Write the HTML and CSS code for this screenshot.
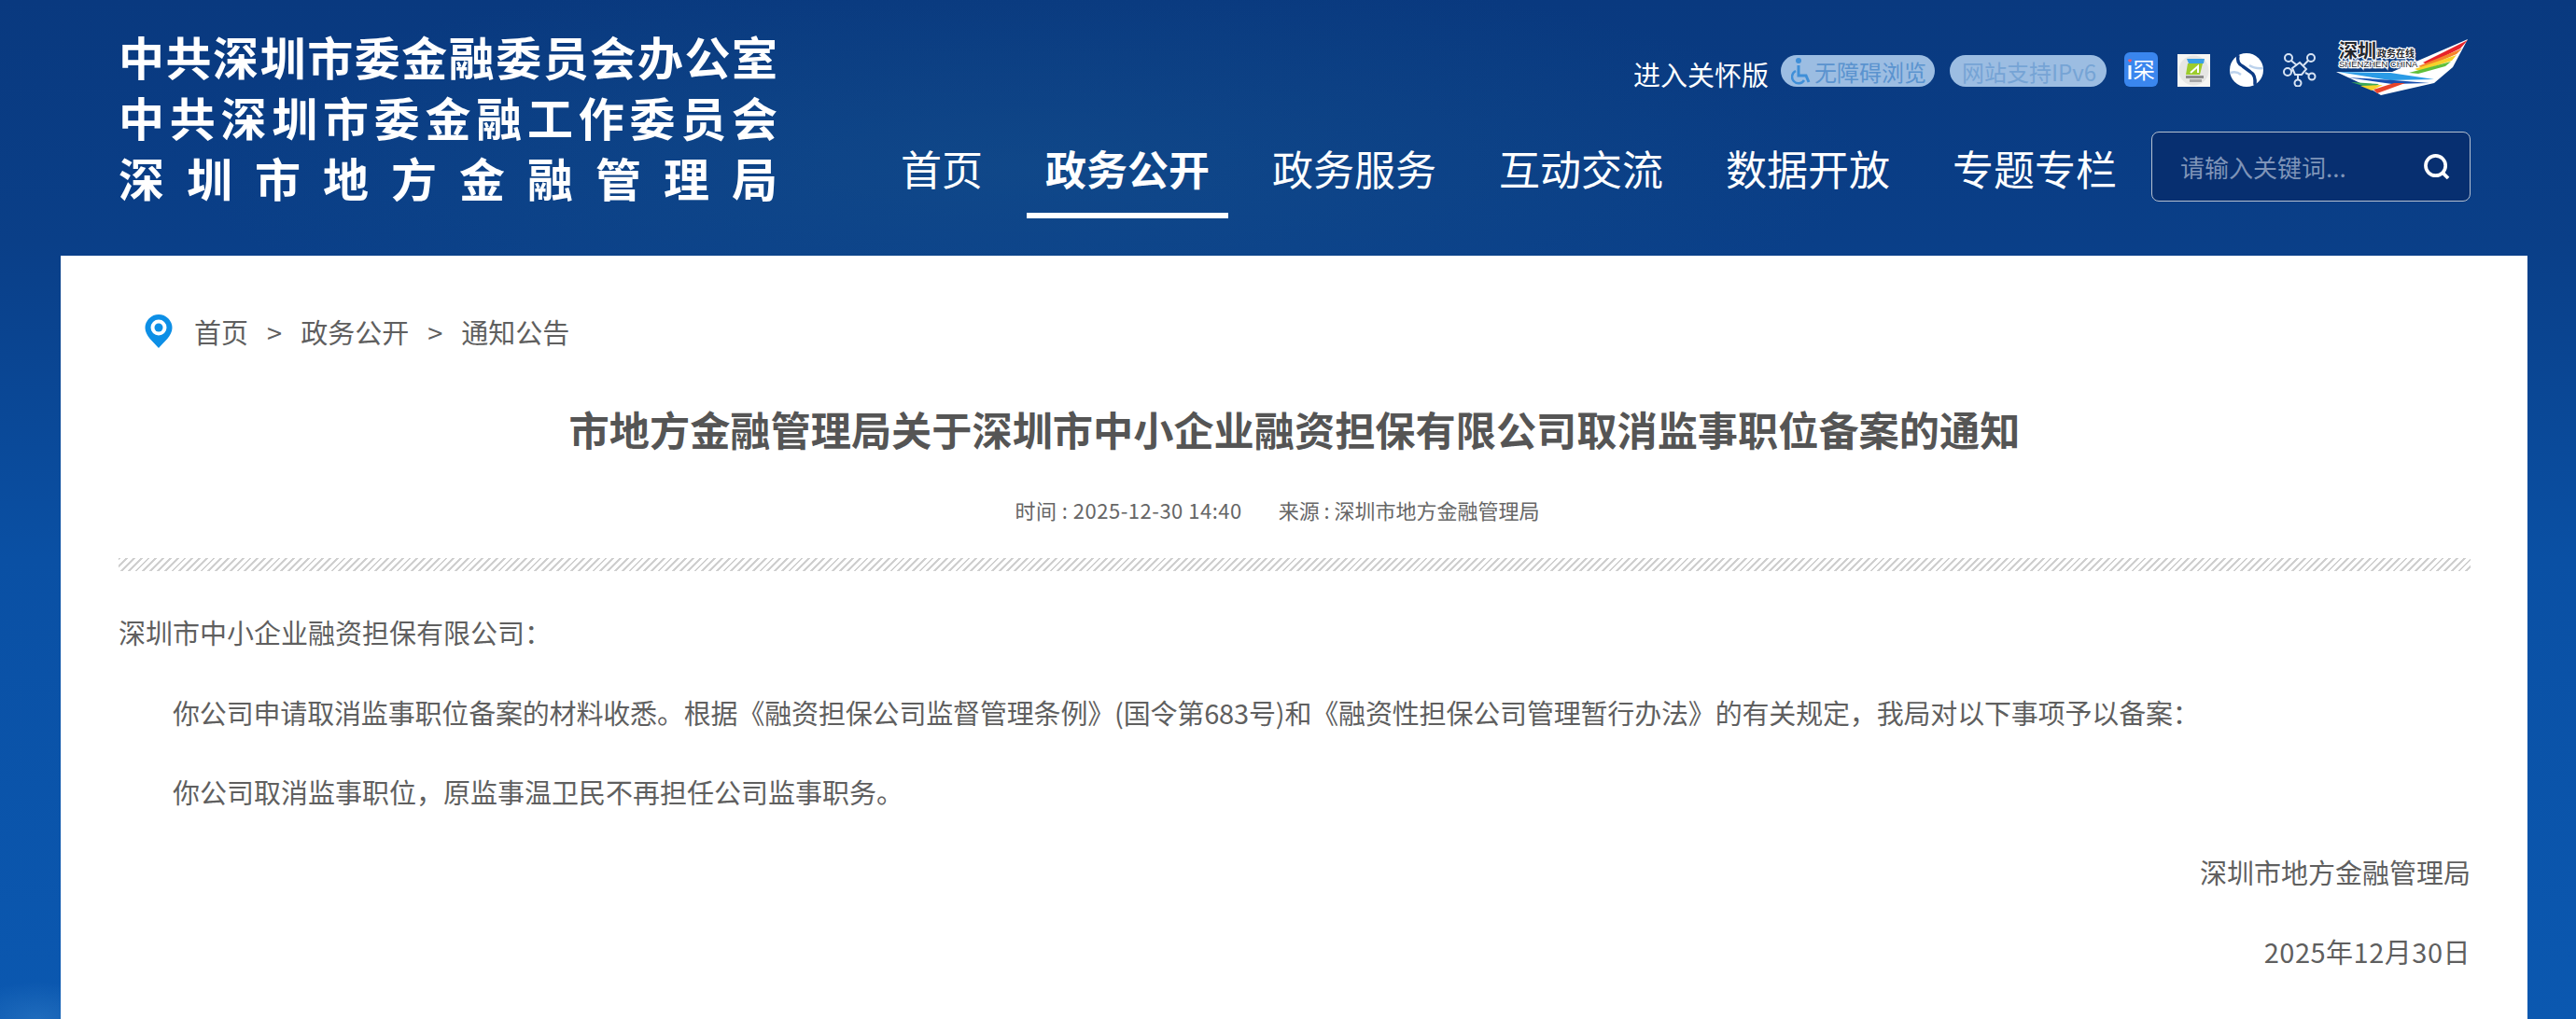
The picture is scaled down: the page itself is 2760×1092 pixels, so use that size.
FILE: index.html
```html
<!DOCTYPE html>
<html lang="zh-CN">
<head>
    <meta charset="UTF-8">
    <title>市地方金融管理局关于深圳市中小企业融资担保有限公司取消监事职位备案的通知</title>
    <link rel="stylesheet" href="styles.css">
</head>
<body>
    <header class="site-header">
        <div class="logo-text">
            <div class="logo-line">中共深圳市委金融委员会办公室</div>
            <div class="logo-line">中共深圳市委金融工作委员会</div>
            <div class="logo-line">深圳市地方金融管理局</div>
        </div>
        <div class="header-right">
            <div class="top-links">
                <a class="care-link">进入关怀版</a>
                <a class="pill pill-access">
                    <svg class="pill-icon" viewBox="0 0 22 30" width="22" height="30">
                        <circle cx="8" cy="4" r="3" fill="#3f8fd8"/>
                        <path d="M8 9v11h8l3 7" fill="none" stroke="#3f8fd8" stroke-width="3"/>
                        <path d="M5 15a7 7 0 1 0 9 10" fill="none" stroke="#3f8fd8" stroke-width="2.500"/>
                    </svg>无障碍浏览
                </a>
                <a class="pill pill-ipv6">网站支持IPv6</a>
                <svg class="top-icon icon-read" viewBox="0 0 36 37" width="36" height="37">
                    <rect width="36" height="37" rx="6" fill="#3a86ee"/>
                    <path d="M6 11l-2-2a1.500 1.500 0 0 1 2-1.500a1.500 1.500 0 0 1 2 1.500z" fill="#ef5a6a"/>
                    <rect x="4.500" y="14" width="3" height="15" fill="#fff"/>
                    <text x="9" y="28" font-size="24" fill="#fff" font-family="Noto Sans CJK SC">罙</text>
                </svg>
                <svg class="top-icon" viewBox="0 0 35 35" width="35" height="35">
                    <rect width="35" height="35" fill="#f6f6f4"/>
                    <circle cx="17.500" cy="17.500" r="16" fill="#e6e6e4"/>
                    <path d="M10 5h19l-1 5H12z" fill="#3aa0e6"/>
                    <path d="M11 10h16l-3 12H9z" fill="#9ccc2c"/>
                    <path d="M14 20l8-7v7" fill="none" stroke="#fff" stroke-width="2"/>
                    <rect x="9" y="23" width="19" height="3" fill="#8c8c8c"/>
                    <rect x="13" y="27" width="13" height="3" fill="#a8a8a8"/>
                </svg>
                <svg class="top-icon" viewBox="0 0 36 36" width="36" height="36">
                    <circle cx="18" cy="18" r="18" fill="#fff"/>
                    <path d="M21 13q6 4 15 3" fill="none" stroke="#bcd2ec" stroke-width="2.500"/>
                    <path d="M1 21q6-2 11 2" fill="none" stroke="#bcd2ec" stroke-width="2.500"/>
                    <path d="M9 2q-2 9 5 12l8 6q6 3 5 14" fill="none" stroke="#0b3a84" stroke-width="3.500"/>
                </svg>
                <svg class="top-icon" viewBox="0 0 36 36" width="36" height="36">
                    <g fill="none" stroke="#d8e4f4" stroke-width="2">
                        <circle cx="6" cy="5" r="4"/>
                        <circle cx="30" cy="5" r="4"/>
                        <circle cx="5" cy="20" r="4"/>
                        <circle cx="31" cy="25" r="3.500"/>
                        <circle cx="16" cy="32" r="3.500"/>
                        <path d="M18 10l7 7-5 6h-7l-3-7z"/>
                        <path d="M9 8l6 5M27 8l-5 5M9 19l2-1M24 21l4 2M16 24v4"/>
                    </g>
                </svg>
                <svg class="city-logo" viewBox="0 0 146 60" width="146" height="60">
                    <path d="M2 35l60 0 81-35-16 30-20 17-57 13-20-12z" fill="#fff"/>
                    <g class="logo-marks">
                        <text x="5" y="20" font-size="20" font-weight="700" font-family="Liberation Serif, Noto Sans CJK SC">深圳</text>
                        <text x="46" y="19" font-size="10" font-weight="700" font-family="Noto Sans CJK SC">政务在线</text>
                        <text x="5" y="30" font-size="9.500" font-family="Liberation Sans">SHENZHEN CHINA</text>
                    </g>
                    <path d="M143 1L95 25l5 2 35-17z" fill="#e8232a"/>
                    <path d="M137 10L90 29l6 2 35-15z" fill="#f5852a"/>
                    <path d="M131 17L86 32l6 2 34-11z" fill="#f7d22a"/>
                    <path d="M125 24L80 36l10 1 29-8z" fill="#5fbf3a"/>
                    <path d="M4 35l56 1 47 7-47 1z" fill="#2a9be6"/>
                    <path d="M14 41l50 3 38 3-40 1z" fill="#174fb0"/>
                    <path d="M18 46l30 2-8 5z" fill="#3aa75a"/>
                    <path d="M28 50l24-1-12 6z" fill="#f7d22a"/>
                    <path d="M46 58l30-11-12 0-22 7z" fill="#e8442a"/>
                </svg>
            </div>
            <div class="nav-row">
                <nav class="main-nav">
                    <a>首页</a>
                    <a class="active">政务公开</a>
                    <a>政务服务</a>
                    <a>互动交流</a>
                    <a>数据开放</a>
                    <a>专题专栏</a>
                </nav>
                <div class="search-box">
                    <span class="search-hint">请输入关键词...</span>
                    <svg viewBox="0 0 24 24" width="34" height="34">
                        <circle cx="11" cy="11" r="7.500" fill="none" stroke="#fff" stroke-width="2.600"/>
                        <path d="M16.500 16.500l4 4" stroke="#fff" stroke-width="2.600"/>
                    </svg>
                </div>
            </div>
        </div>
    </header>

    <main class="content">
        <div class="breadcrumb">
            <svg class="pin" viewBox="0 0 30 36" width="30" height="36">
                <path d="M15 0a14.500 14.500 0 0 1 14.500 14.500C29.500 23 20 30 15 36 10 30 .5 23 .5 14.500A14.500 14.500 0 0 1 15 0z" fill="#0d8fe6"/>
                <circle cx="15" cy="14" r="8.500" fill="#fff"/>
                <circle cx="15" cy="14" r="4.500" fill="#0d8fe6"/>
            </svg>
            <a>首页</a><span class="sep">&gt;</span><a>政务公开</a><span class="sep">&gt;</span><a>通知公告</a>
        </div>
        <h1 class="article-title">市地方金融管理局关于深圳市中小企业融资担保有限公司取消监事职位备案的通知</h1>
        <div class="article-meta">
            <span class="meta-time">时间 : 2025-12-30 14:40</span>
            <span class="meta-source">来源 : 深圳市地方金融管理局</span>
        </div>
        <div class="hatch"></div>
        <div class="article-body">
            <p>深圳市中小企业融资担保有限公司：</p>
            <p class="indent tight">你公司申请取消监事职位备案的材料收悉。根据《融资担保公司监督管理条例》(国令第683号)和《融资性担保公司管理暂行办法》的有关规定，我局对以下事项予以备案：</p>
            <p class="indent">你公司取消监事职位，原监事温卫民不再担任公司监事职务。</p>
            <p class="right">深圳市地方金融管理局</p>
            <p class="right date">2025年12月30日</p>
        </div>
    </main>
</body>
</html>
```
FILE: styles.css
```css
html, body {
    margin: 0;
    height: 1092px;
    overflow: hidden;
}

body {
    font-family: "Noto Sans CJK SC", "Liberation Sans", sans-serif;
    color: #5f5f5f;
    background:
        radial-gradient(ellipse 80px 40px at 40px 1092px, rgba(90, 165, 225, 0.25), transparent),
        radial-gradient(ellipse 900px 220px at 1100px 180px, rgba(30, 95, 145, 0.3), transparent),
        linear-gradient(180deg, #09397f 0, #0a3f88 260px, #0a50a4 600px, #0b58b0 1092px);
}

a {
    color: inherit;
    text-decoration: none;
}

.site-header {
    display: flex;
    justify-content: space-between;
    height: 274px;
    padding: 0 113px 0 127px;
    box-sizing: border-box;
}

.logo-text {
    width: 706px;
    padding-top: 27px;
}

.logo-line {
    height: 65px;
    font-size: 49px;
    line-height: 65px;
    font-weight: 700;
    color: #fff;
    text-align: justify;
    text-align-last: justify;
    text-justify: inter-character;
}

.header-right {
    display: flex;
    flex-direction: column;
    align-items: flex-end;
}

.top-links {
    display: flex;
    align-items: flex-end;
    height: 51px;
    margin-top: 42px;
}

.care-link {
    font-size: 29px;
    line-height: 28px;
    color: #fff;
    margin-right: 13px;
}

.pill {
    display: flex;
    align-items: center;
    height: 34px;
    border-radius: 17px;
    background: #9cbde2;
    font-size: 24px;
}

.pill-access {
    padding: 0 9px 0 11px;
    margin-right: 16px;
    color: #5a93cf;
}

.pill-ipv6 {
    padding: 0 11px 0 13px;
    color: #76a4d5;
}

.pill-icon {
    margin-right: 3px;
}

.top-icon {
    margin-left: 21px;
}

.icon-read {
    margin-left: 19px;
}

.city-logo {
    margin: 0 0 -9px 19px;
}

.logo-marks text {
    fill: #23262c;
    stroke: #fff;
    stroke-width: 2.500px;
    paint-order: stroke;
}

.nav-row {
    display: flex;
    align-items: flex-start;
    margin-top: 48px;
}

.main-nav {
    display: flex;
    gap: 27px;
    margin-right: -1px;
}

.main-nav a {
    padding: 0 20px;
    height: 93px;
    line-height: 78px;
    font-size: 44px;
    color: #fff;
    box-sizing: border-box;
}

.main-nav a.active {
    font-weight: 700;
    border-bottom: 6px solid #fff;
}

.search-box {
    display: flex;
    align-items: center;
    justify-content: space-between;
    width: 342px;
    height: 75px;
    margin-left: 18px;
    padding: 0 18px 0 30px;
    box-sizing: border-box;
    border: 1px solid #b5c0d0;
    border-radius: 8px;
    background: #072f70;
}

.search-hint {
    font-size: 26px;
    color: #7f94b8;
}

.content {
    margin: 0 52px 0 65px;
    height: 818px;
    padding: 0 61px 0 62px;
    background: #fff;
}

.breadcrumb {
    display: flex;
    align-items: center;
    height: 46px;
    padding: 58px 0 0 28px;
    font-size: 29px;
}

.pin {
    margin-right: 23px;
}

.sep {
    margin: 0 20px;
}

.article-title {
    margin: 51px 0 0;
    text-align: center;
    font-size: 43.200px;
    line-height: 60px;
    font-weight: 700;
    color: #555;
}

.article-meta {
    margin-top: 41px;
    text-align: center;
    font-size: 22px;
    line-height: 32px;
    color: #666;
}

.meta-time {
    margin-right: 34px;
    letter-spacing: 0.500px;
}

.meta-source {
    margin-right: 37px;
}

.hatch {
    height: 14px;
    margin-top: 36px;
    background: repeating-linear-gradient(135deg, #cfcfcf 0 2px, #fff 2px 5.500px);
}

.article-body {
    margin-top: 40px;
    font-size: 29px;
    line-height: 50px;
}

.article-body p {
    margin: 0 0 35.500px;
}

.article-body .indent {
    text-indent: 58px;
}

.article-body .tight {
    letter-spacing: -0.170px;
}

.article-body .right {
    text-align: right;
}

.article-body .date {
    letter-spacing: 0.500px;
}
```
